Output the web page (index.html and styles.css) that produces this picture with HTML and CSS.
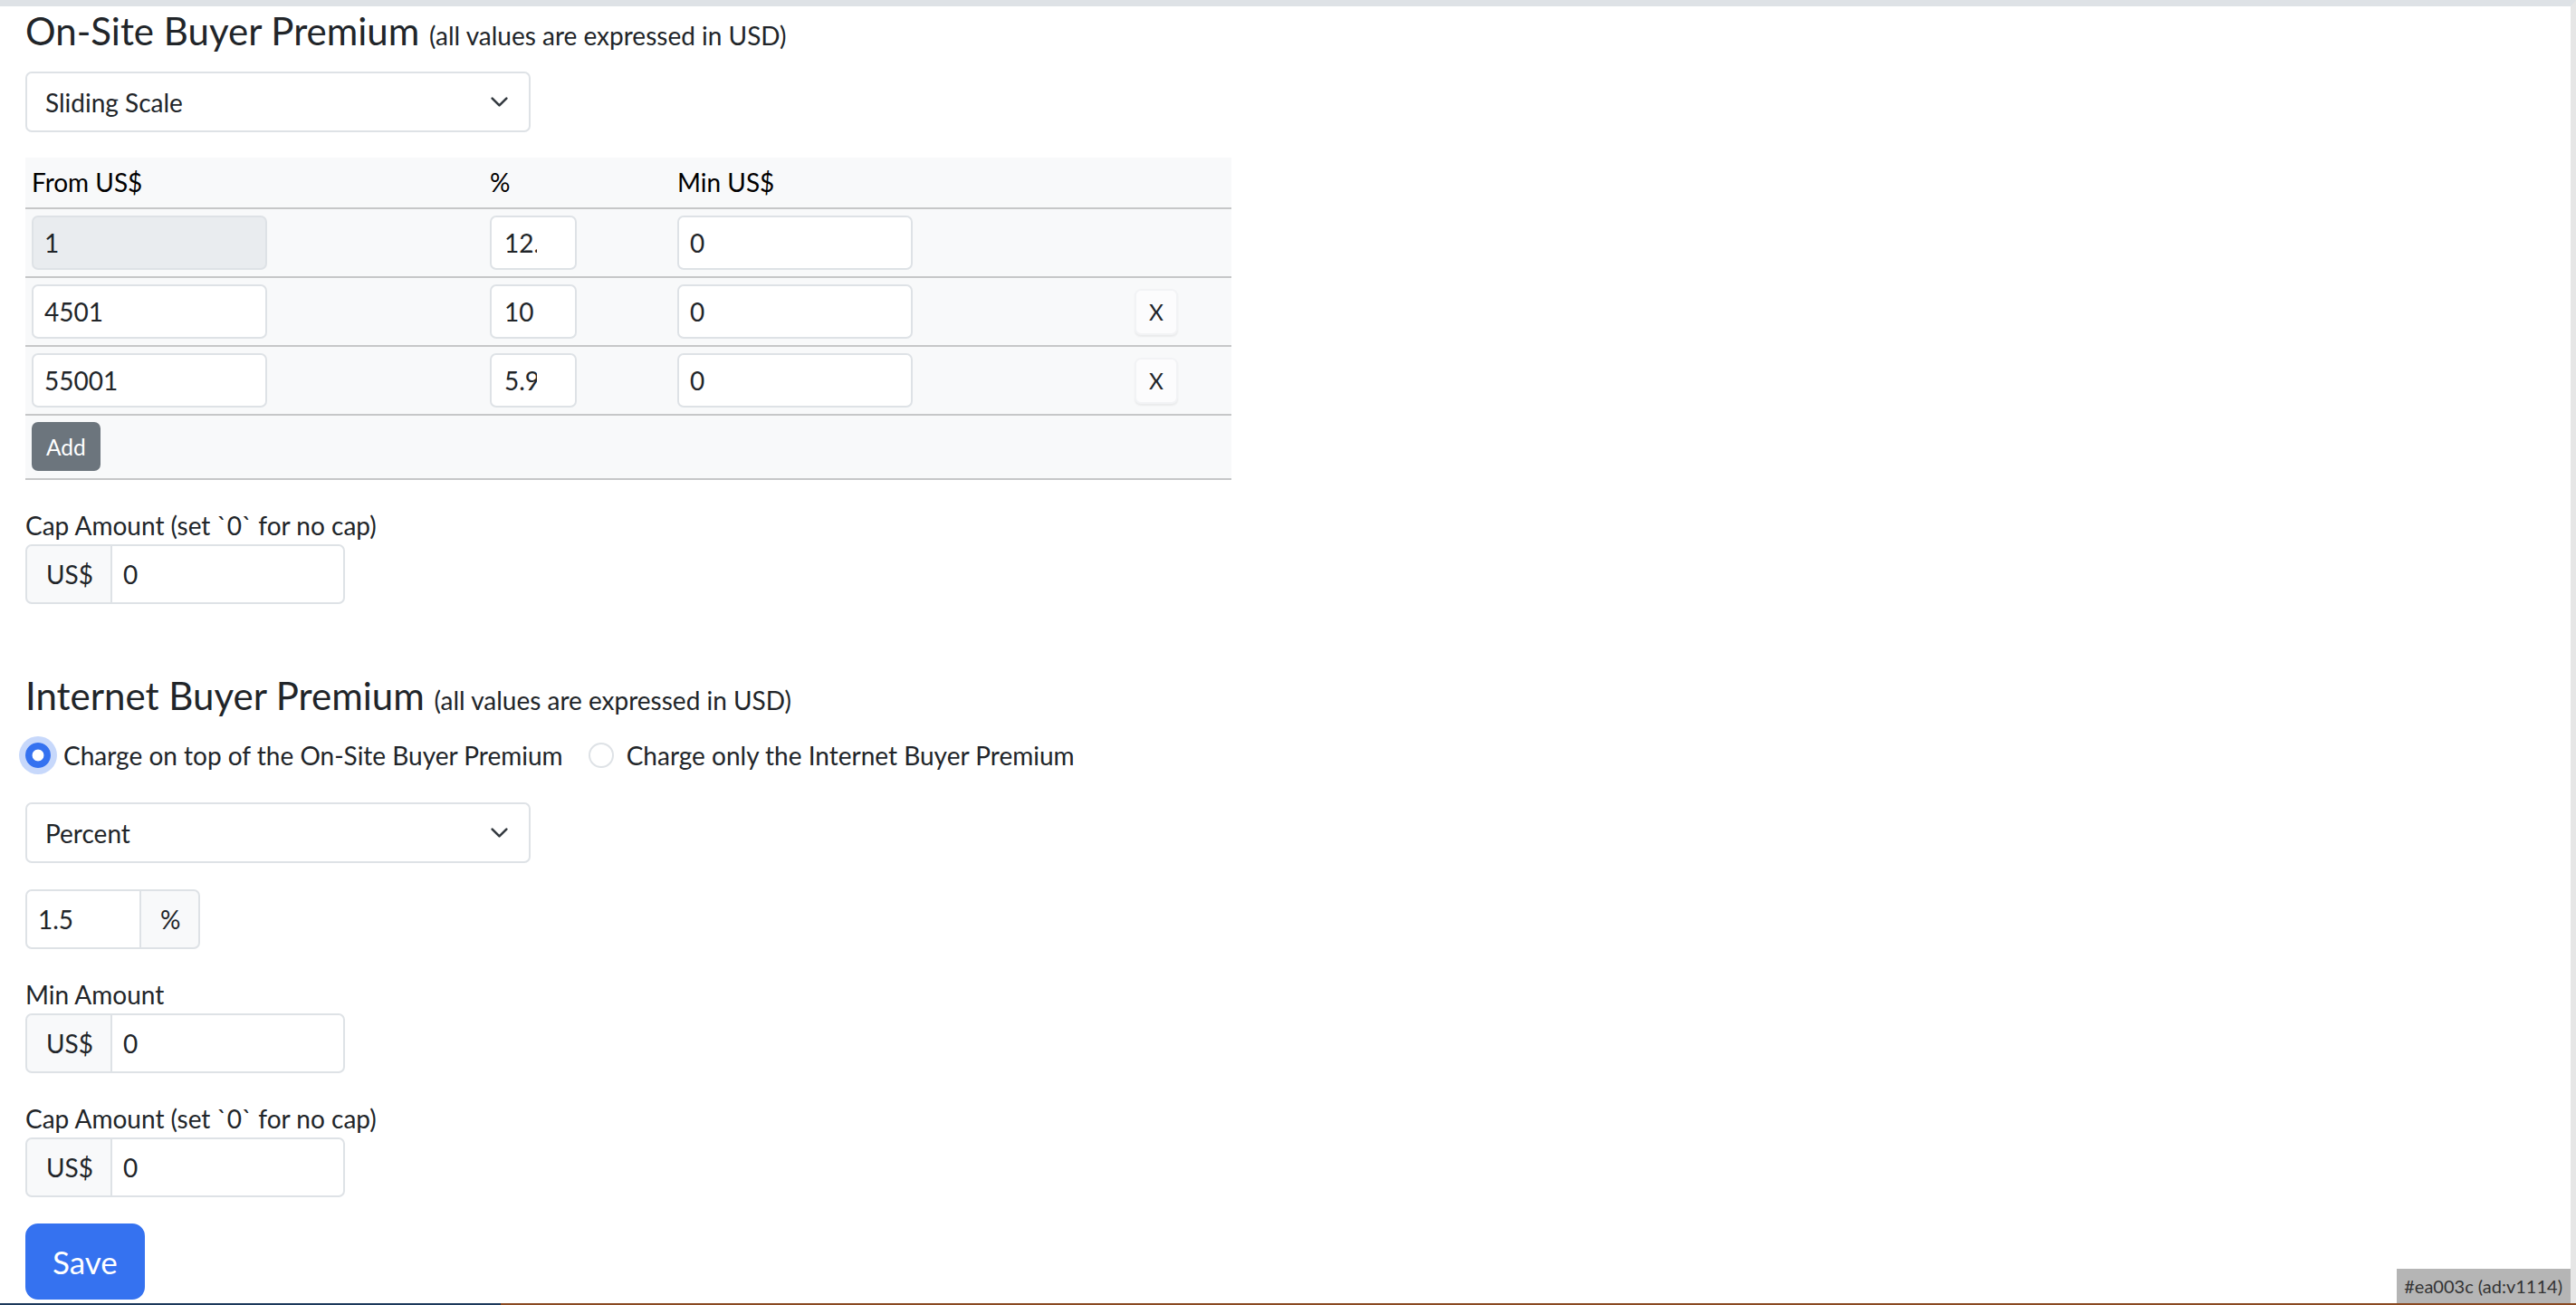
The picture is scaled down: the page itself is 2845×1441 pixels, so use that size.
FILE: index.html
```html
<!DOCTYPE html>
<html lang="en">
<head>
<meta charset="utf-8">
<title>Buyer Premium</title>
<link rel="stylesheet" href="styles.css">
</head>
<body>
<div class="page">
  <section class="bp bp-onsite">
    <h4 class="bp-title">On-Site Buyer Premium <small class="bp-note">(all values are expressed in USD)</small></h4>
    <div class="fselect"><span>Sliding Scale</span><svg class="chev" viewBox="0 0 16 16"><path d="m2 5 6 6 6-6"/></svg></div>
    <table class="scale">
      <colgroup><col class="c-from"><col class="c-pct"><col class="c-min"><col class="c-x"></colgroup>
      <thead>
        <tr><th>From US$</th><th>%</th><th>Min US$</th><th></th></tr>
      </thead>
      <tbody>
        <tr>
          <td><input class="fc fc-wide" type="text" value="1" disabled></td>
          <td><input class="fc fc-pct" type="text" value="12.5"></td>
          <td><input class="fc fc-wide" type="text" value="0"></td>
          <td></td>
        </tr>
        <tr>
          <td><input class="fc fc-wide" type="text" value="4501"></td>
          <td><input class="fc fc-pct" type="text" value="10"></td>
          <td><input class="fc fc-wide" type="text" value="0"></td>
          <td><button class="btn-x" type="button">X</button></td>
        </tr>
        <tr>
          <td><input class="fc fc-wide" type="text" value="55001"></td>
          <td><input class="fc fc-pct" type="text" value="5.9"></td>
          <td><input class="fc fc-wide" type="text" value="0"></td>
          <td><button class="btn-x" type="button">X</button></td>
        </tr>
        <tr class="add-row">
          <td colspan="4"><button class="btn-add" type="button">Add</button></td>
        </tr>
      </tbody>
    </table>
    <label class="flabel">Cap Amount (set `0` for no cap)</label>
    <div class="igroup">
      <span class="igt igt-pre">US$</span>
      <input class="fc ig-input" type="text" value="0">
    </div>
  </section>

  <section class="bp bp-internet">
    <h4 class="bp-title">Internet Buyer Premium <small class="bp-note">(all values are expressed in USD)</small></h4>
    <div class="radios">
      <label class="rcheck"><span class="rdot on"></span><span>Charge on top of the On-Site Buyer Premium</span></label>
      <label class="rcheck"><span class="rdot"></span><span>Charge only the Internet Buyer Premium</span></label>
    </div>
    <div class="fselect"><span>Percent</span><svg class="chev" viewBox="0 0 16 16"><path d="m2 5 6 6 6-6"/></svg></div>
    <div class="igroup igroup-pct">
      <input class="fc ig-first" type="text" value="1.5">
      <span class="igt igt-post">%</span>
    </div>
    <label class="flabel">Min Amount</label>
    <div class="igroup">
      <span class="igt igt-pre">US$</span>
      <input class="fc ig-input" type="text" value="0">
    </div>
    <label class="flabel">Cap Amount (set `0` for no cap)</label>
    <div class="igroup">
      <span class="igt igt-pre">US$</span>
      <input class="fc ig-input" type="text" value="0">
    </div>
    <button class="btn-save" type="button">Save</button>
  </section>
</div>
<div class="env-badge">#ea003c (ad:v1114)</div>
<div class="footer-edge"></div>
</body>
</html>
```

FILE: styles.css
```css
* {
  box-sizing: border-box;
}

html,
body {
  margin: 0;
  padding: 0;
}

body {
  font-family: Lato, "Noto Sans", "Liberation Sans", sans-serif;
  font-size: 28px;
  line-height: 42px;
  color: #212529;
  background: #fff;
}

.page {
  border-top: 7px solid #dee2e6;
  border-right: 6px solid #e6e6e6;
  min-height: 100vh;
  padding-left: 28px;
}

.bp-title {
  font-size: 42px;
  line-height: 50px;
  font-weight: 400;
  margin: 2px 0 20px;
  color: #212529;
}

.bp-note {
  font-size: 28px;
  line-height: 1;
}

.fselect {
  width: 558px;
  height: 67px;
  border: 2px solid #dee2e6;
  border-radius: 7px;
  background: #fff;
  display: flex;
  align-items: center;
  justify-content: space-between;
  padding: 0 22px 0 20px;
}

.chev {
  width: 21px;
  height: 21px;
  fill: none;
  stroke: #343a40;
  stroke-width: 2;
  stroke-linecap: round;
  stroke-linejoin: round;
}

.bp-onsite .fselect {
  margin-bottom: 28px;
}

/* sliding scale table */
.scale {
  width: 1332px;
  table-layout: fixed;
  border-collapse: collapse;
  background: #f8f9fa;
  color: #000;
  margin-bottom: 29px;
}

.c-from { width: 506px; }
.c-pct { width: 207px; }
.c-min { width: 505px; }
.c-x { width: 114px; }

.scale th {
  text-align: left;
  font-weight: 400;
  padding: 6px 7px 7px;
  line-height: 42px;
  border-bottom: 2px solid #c6c7c8;
}

.scale td {
  padding: 7px;
  border-bottom: 2px solid #c6c7c8;
  vertical-align: middle;
}

.scale .add-row td {
  padding-bottom: 8px;
}

.fc {
  display: block;
  height: 60px;
  border: 2px solid #dee2e6;
  border-radius: 7px;
  background: #fff;
  color: #212529;
  -webkit-text-fill-color: #212529;
  font-family: Lato, "Noto Sans", "Liberation Sans", sans-serif;
  font-size: 28px;
  padding: 0 12px;
  margin: 0;
  outline: none;
}

.fc:disabled {
  background: #e9ecef;
  opacity: 1;
}

.fc-wide {
  width: 260px;
}

.fc-pct {
  width: 96px;
  padding-left: 14px;
  padding-right: 42px;
}

.btn-x {
  display: block;
  width: 48px;
  height: 51px;
  padding: 0;
  border: 2px solid #f2f3f5;
  border-radius: 7px;
  background: #fcfcfd;
  box-shadow: 0 2px 2px rgba(0, 0, 0, 0.06);
  color: #212529;
  font-family: Lato, "Noto Sans", "Liberation Sans", sans-serif;
  font-size: 24.5px;
}

.btn-add {
  display: block;
  height: 54px;
  padding: 0 14px;
  border: 2px solid #6c757d;
  border-radius: 7px;
  background: #6c757d;
  color: #fff;
  font-family: Lato, "Noto Sans", "Liberation Sans", sans-serif;
  font-size: 24.5px;
}

/* labels and groups */
.flabel {
  display: block;
  line-height: 42px;
}

.igroup {
  display: flex;
  width: 353px;
  height: 66px;
}

.igt {
  flex: none;
  display: flex;
  align-items: center;
  background: #f8f9fa;
  border: 2px solid #dee2e6;
  padding-left: 21px;
}

.igt-pre {
  width: 96px;
  border-radius: 7px 0 0 7px;
}

.igt-post {
  width: 67px;
  margin-left: -2px;
  border-radius: 0 7px 7px 0;
}

.ig-input {
  flex: 1;
  min-width: 0;
  height: 66px;
  margin-left: -2px;
  border-radius: 0 7px 7px 0;
}

.ig-first {
  flex: none;
  width: 128px;
  height: 66px;
  border-radius: 7px 0 0 7px;
}

.igroup-pct {
  width: auto;
}

/* internet section */
.bp-internet {
  margin-top: 76px;
}

.radios {
  display: flex;
  margin-bottom: 31px;
}

.rcheck {
  display: flex;
  align-items: center;
  gap: 14px;
  margin-right: 28px;
}

.rdot {
  flex: none;
  width: 28px;
  height: 28px;
  border-radius: 50%;
  border: 2px solid #dee2e6;
  background: #fff;
}

.rdot.on {
  border-color: #3572f0;
  background: radial-gradient(circle, #fff 0 6px, #3572f0 6.8px);
  box-shadow: 0 0 0 7px rgba(53, 114, 240, 0.28);
}

.bp-internet .fselect,
.bp-internet .igroup {
  margin-bottom: 29px;
}

.btn-save {
  display: block;
  height: 84px;
  padding: 0 28px;
  border: 2px solid #3572f0;
  border-radius: 14px;
  background: #3572f0;
  color: #fff;
  font-family: Lato, "Noto Sans", "Liberation Sans", sans-serif;
  font-size: 35px;
}

/* overlays */
.env-badge {
  position: fixed;
  right: 6px;
  bottom: 2px;
  background: #b5b5b5;
  color: #333;
  font-size: 20px;
  line-height: 30px;
  padding: 4px 9px 4px 8px;
}

.footer-edge {
  position: fixed;
  left: 0;
  right: 0;
  bottom: 0;
  height: 2px;
  background: linear-gradient(to right, #1d3a5c 0 553px, #8a4a22 553px);
}
```
